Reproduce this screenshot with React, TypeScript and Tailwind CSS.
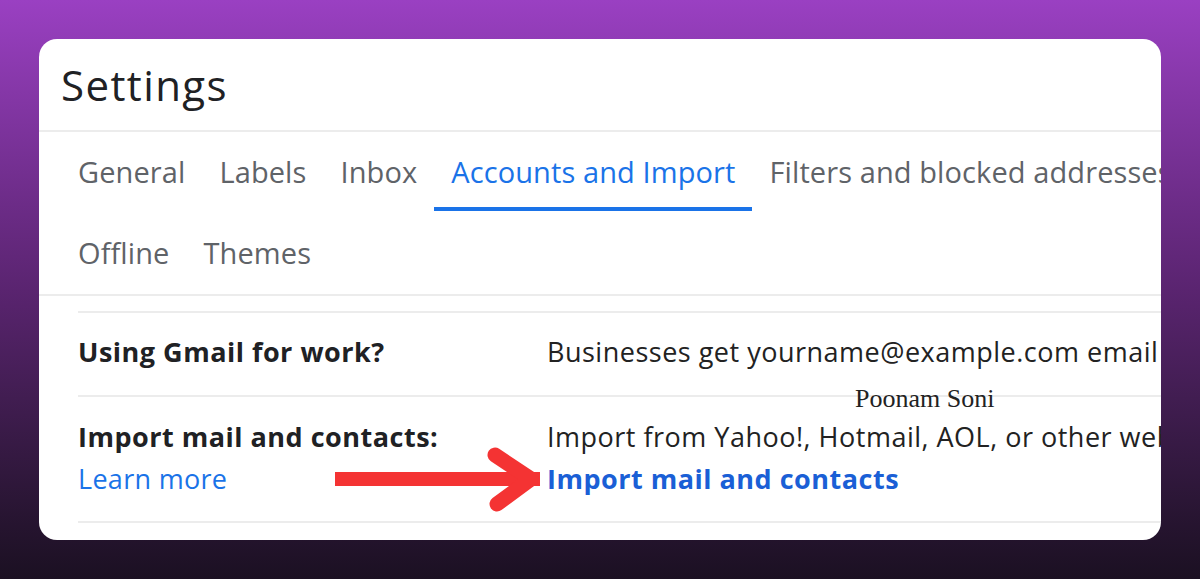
import React from "react";

const tabsTop = ["General", "Labels", "Inbox", "Accounts and Import", "Filters and blocked addresses"];
const tabsBottom = ["Offline", "Themes"];

function Tab({ label, active }: { label: string; active?: boolean }) {
  return (
    <div className="relative flex h-full items-center px-[17px] whitespace-nowrap">
      <span className={active ? "text-[#1a73e8]" : "text-[#5f6368]"}>{label}</span>
      {active && <div className="absolute bottom-0 left-0 right-0 h-[4px] bg-[#1a73e8]" />}
    </div>
  );
}

function RedArrow() {
  return (
    <svg width="230" height="70" viewBox="0 0 230 70" className="absolute left-[296px] top-[405px]">
      <path d="M0 35 H205" stroke="#f43333" strokeWidth="14" />
      <path d="M160 11 L196 35 L162 60" stroke="#f43333" strokeWidth="15" fill="none" strokeLinecap="round" strokeLinejoin="round" />
    </svg>
  );
}

export default function App() {
  return (
    <div className="h-[579px] w-full overflow-hidden bg-gradient-to-b from-[#9a40c2] via-[#5a2470] to-[#1b1022] px-[39px] pt-[39px]" style={{ fontFamily: "'Open Sans', Roboto, sans-serif" }}>
      <div className="relative h-[501px] overflow-hidden rounded-[18px] bg-white">
        <div className="flex h-[91px] items-center pl-[22px] text-[42px] tracking-[1.4px] text-[#202124]">
          Settings
        </div>
        <div className="h-[2px] bg-[#ececec]" />
        <div className="flex h-[79px] pl-[22px] text-[29px] tracking-[0.1px]">
          {tabsTop.map(t => (
            <Tab key={t} label={t} active={t === "Accounts and Import"} />
          ))}
        </div>
        <div className="flex h-[83px] items-center pl-[22px] text-[29px] tracking-[0.1px]">
          {tabsBottom.map(t => (
            <Tab key={t} label={t} />
          ))}
        </div>
        <div className="h-[2px] bg-[#ececec]" />
        <div className="ml-[39px] mt-[15px] border-t-2 border-[#ececec] text-[27px]">
          <div className="flex h-[84px] items-center border-b-2 border-[#ececec] pb-[3px]">
            <div className="w-[469px] shrink-0 font-bold tracking-[0.5px] text-[#202124]">Using Gmail for work?</div>
            <div className="whitespace-nowrap tracking-[0.5px] text-[#222]">Businesses get yourname@example.com email</div>
          </div>
          <div className="flex h-[126px] items-center border-b-2 border-[#ececec] pb-[3px]">
            <div className="w-[469px] shrink-0 leading-[42px]">
              <div className="font-bold tracking-[0.5px] text-[#202124]">Import mail and contacts:</div>
              <div className="tracking-[0.3px] text-[#1a73e8]">Learn more</div>
            </div>
            <div className="whitespace-nowrap leading-[42px]">
              <div className="tracking-[0.5px] text-[#222]">Import from Yahoo!, Hotmail, AOL, or other webmail</div>
              <div className="font-bold tracking-[0.5px] text-[#1a5fd6]">Import mail and contacts</div>
            </div>
          </div>
        </div>
        <div className="absolute left-[816px] top-[340px] text-[26px] text-[#222]" style={{ fontFamily: "'Liberation Serif', serif" }}>
          Poonam Soni
        </div>
        <RedArrow />
      </div>
    </div>
  );
}
